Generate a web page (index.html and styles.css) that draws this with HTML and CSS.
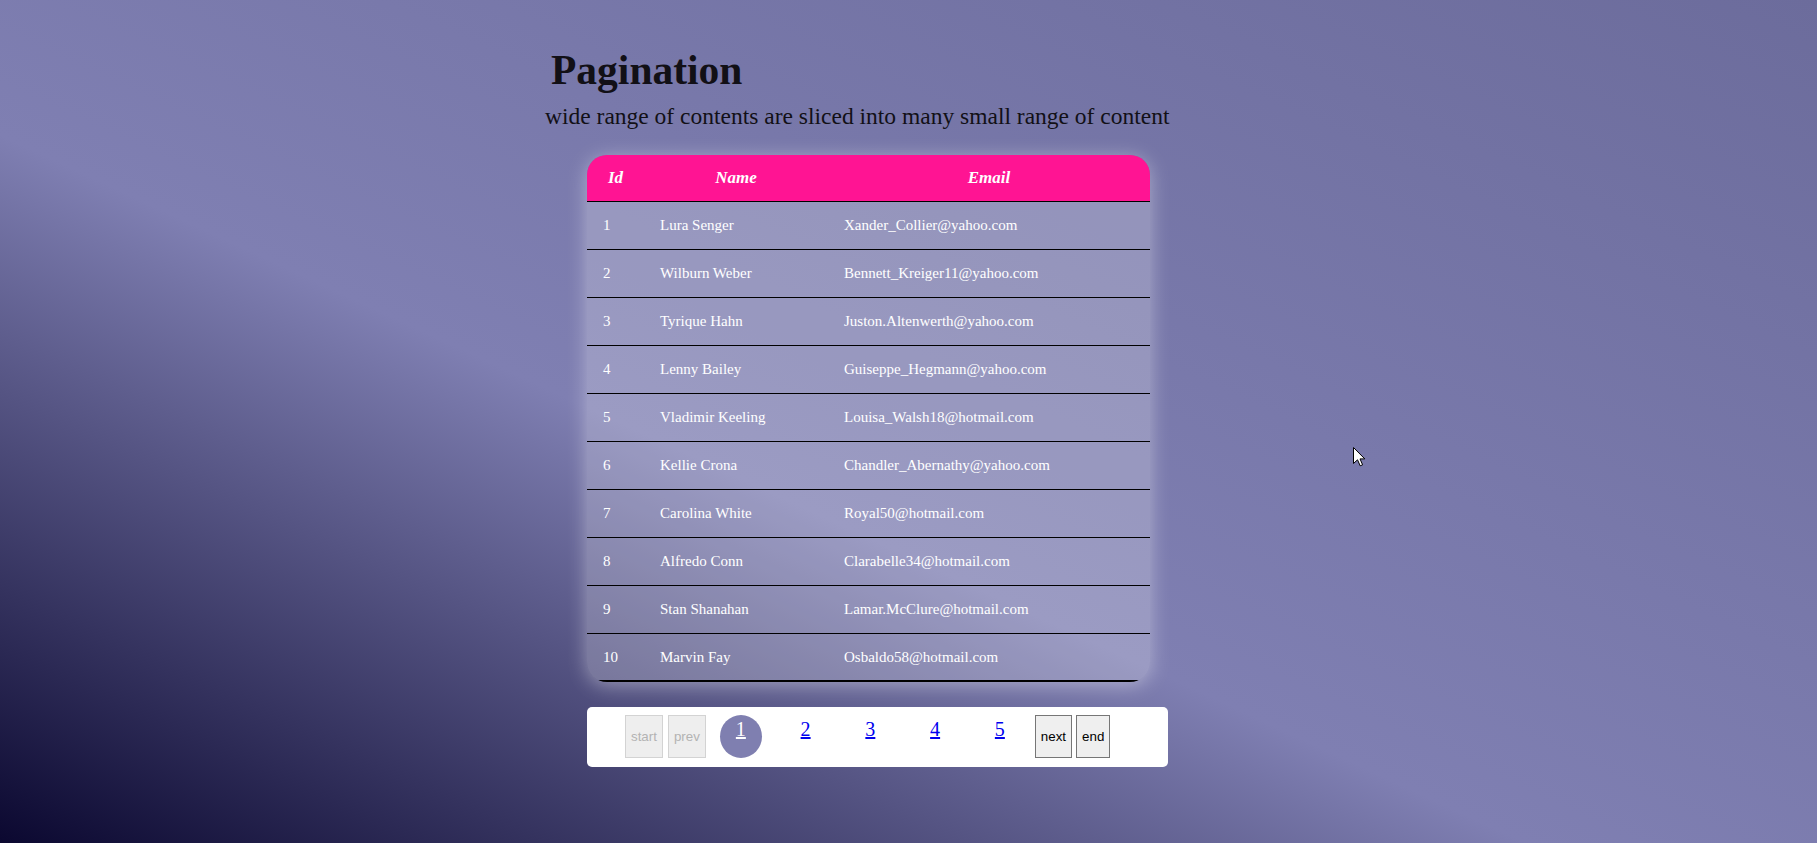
FILE: index.html
```html
<!DOCTYPE html>
<html lang="en">
<head>
<meta charset="utf-8">
<title>Pagination</title>
<link rel="stylesheet" href="styles.css">
</head>
<body>
<div class="wrap">
  <h1 class="title">Pagination</h1>
  <p class="subtitle">wide range of contents are sliced into many small range of content</p>

  <div class="table-card">
    <table class="data">
      <colgroup>
        <col class="c-id">
        <col class="c-name">
        <col class="c-email">
      </colgroup>
      <thead>
        <tr><th>Id</th><th>Name</th><th>Email</th></tr>
      </thead>
      <tbody>
        <tr><td>1</td><td>Lura Senger</td><td>Xander_Collier@yahoo.com</td></tr>
        <tr><td>2</td><td>Wilburn Weber</td><td>Bennett_Kreiger11@yahoo.com</td></tr>
        <tr><td>3</td><td>Tyrique Hahn</td><td>Juston.Altenwerth@yahoo.com</td></tr>
        <tr><td>4</td><td>Lenny Bailey</td><td>Guiseppe_Hegmann@yahoo.com</td></tr>
        <tr><td>5</td><td>Vladimir Keeling</td><td>Louisa_Walsh18@hotmail.com</td></tr>
        <tr><td>6</td><td>Kellie Crona</td><td>Chandler_Abernathy@yahoo.com</td></tr>
        <tr><td>7</td><td>Carolina White</td><td>Royal50@hotmail.com</td></tr>
        <tr><td>8</td><td>Alfredo Conn</td><td>Clarabelle34@hotmail.com</td></tr>
        <tr><td>9</td><td>Stan Shanahan</td><td>Lamar.McClure@hotmail.com</td></tr>
        <tr><td>10</td><td>Marvin Fay</td><td>Osbaldo58@hotmail.com</td></tr>
      </tbody>
    </table>
  </div>

  <nav class="pager">
    <button class="btn btn-start" disabled>start</button>
    <button class="btn btn-prev" disabled>prev</button>
    <span class="page active"><a href="#">1</a></span>
    <span class="page"><a href="#">2</a></span>
    <span class="page"><a href="#">3</a></span>
    <span class="page"><a href="#">4</a></span>
    <span class="page last"><a href="#">5</a></span>
    <button class="btn btn-next">next</button>
    <button class="btn btn-end">end</button>
  </nav>
</div>

<svg class="cursor" width="13" height="20" viewBox="0 0 13 20" xmlns="http://www.w3.org/2000/svg">
  <path d="M0.5 0.5 L0.5 16.5 L4.5 12.8 L7.2 18.8 L9.6 17.8 L7 11.9 L11.8 11.9 Z" fill="#fff" stroke="#000" stroke-width="1" stroke-linejoin="miter"/>
</svg>
</body>
</html>
```
FILE: styles.css
```css
html {
  min-height: 100%;
}

body {
  margin: 0;
  min-height: 100vh;
  font-family: "Liberation Serif", "Times New Roman", serif;
  background: linear-gradient(to top right, #0b0830 0%, #7f7fb2 42%, #6c6c9c 100%);
  background-attachment: fixed;
}

.wrap {
  width: 727px;
  margin: 0 auto;
  padding-top: 47px;
}

.title {
  margin: 0 0 0 6px;
  font-size: 41.5px;
  line-height: 47px;
  font-weight: bold;
  color: #121016;
}

.subtitle {
  margin: 9px 0 0;
  font-size: 23.5px;
  line-height: 27px;
  color: #121016;
}

.table-card {
  margin: 24.5px 0 0 42px;
  width: 563px;
  border-radius: 20px;
  overflow: hidden;
  box-shadow: 0 3px 20px rgba(255, 255, 255, 0.4);
}

.data {
  width: 563px;
  table-layout: fixed;
  border-collapse: separate;
  border-spacing: 0;
  color: #fff;
}

.c-id { width: 57px; }
.c-name { width: 184px; }
.c-email { width: 322px; }

.data th {
  background: #ff1493;
  font-size: 17px;
  line-height: 17px;
  font-weight: bold;
  font-style: italic;
  text-align: center;
  padding: 14px 0 15px;
  border-bottom: 1px solid #000;
}

.data td {
  background: rgba(255, 255, 255, 0.22);
  font-size: 15px;
  line-height: 15px;
  padding: 16px 0 16px 16px;
  border-bottom: 1px solid #000;
  white-space: nowrap;
}

.data tbody tr:last-child td {
  border-bottom-width: 2px;
  padding-bottom: 15px;
}

.pager {
  margin: 25px 0 0 42px;
  width: 581px;
  height: 60px;
  box-sizing: border-box;
  padding-left: 38px;
  background: #fff;
  border-radius: 5px;
  display: flex;
  align-items: center;
}

.btn {
  height: 43px;
  margin: 0;
  padding: 0 5px;
  font-family: "Liberation Sans", Arial, sans-serif;
  font-size: 13.333px;
  background: #efefef;
  border: 1px solid #767676;
  border-radius: 0;
  color: #000;
}

.btn:disabled {
  color: #b3b3b3;
  border-color: #d3d3d3;
  background: #eeeeee;
}

.btn-start { margin-right: 5px; }
.btn-prev { margin-right: 14px; }
.btn-next { margin-right: 4px; }

.page {
  width: 42px;
  height: 43px;
  box-sizing: border-box;
  padding-top: 3px;
  margin-right: 22.75px;
  display: flex;
  justify-content: center;
  align-items: flex-start;
  border-radius: 50%;
  font-size: 20px;
  line-height: 23px;
}

.page.last { margin-right: 14px; }

.page a {
  color: #0000ee;
  text-decoration: underline;
}

.page.active {
  background: #7f7fb0;
}

.page.active a {
  color: #fff;
}

.cursor {
  position: absolute;
  left: 1353px;
  top: 447px;
}
```
